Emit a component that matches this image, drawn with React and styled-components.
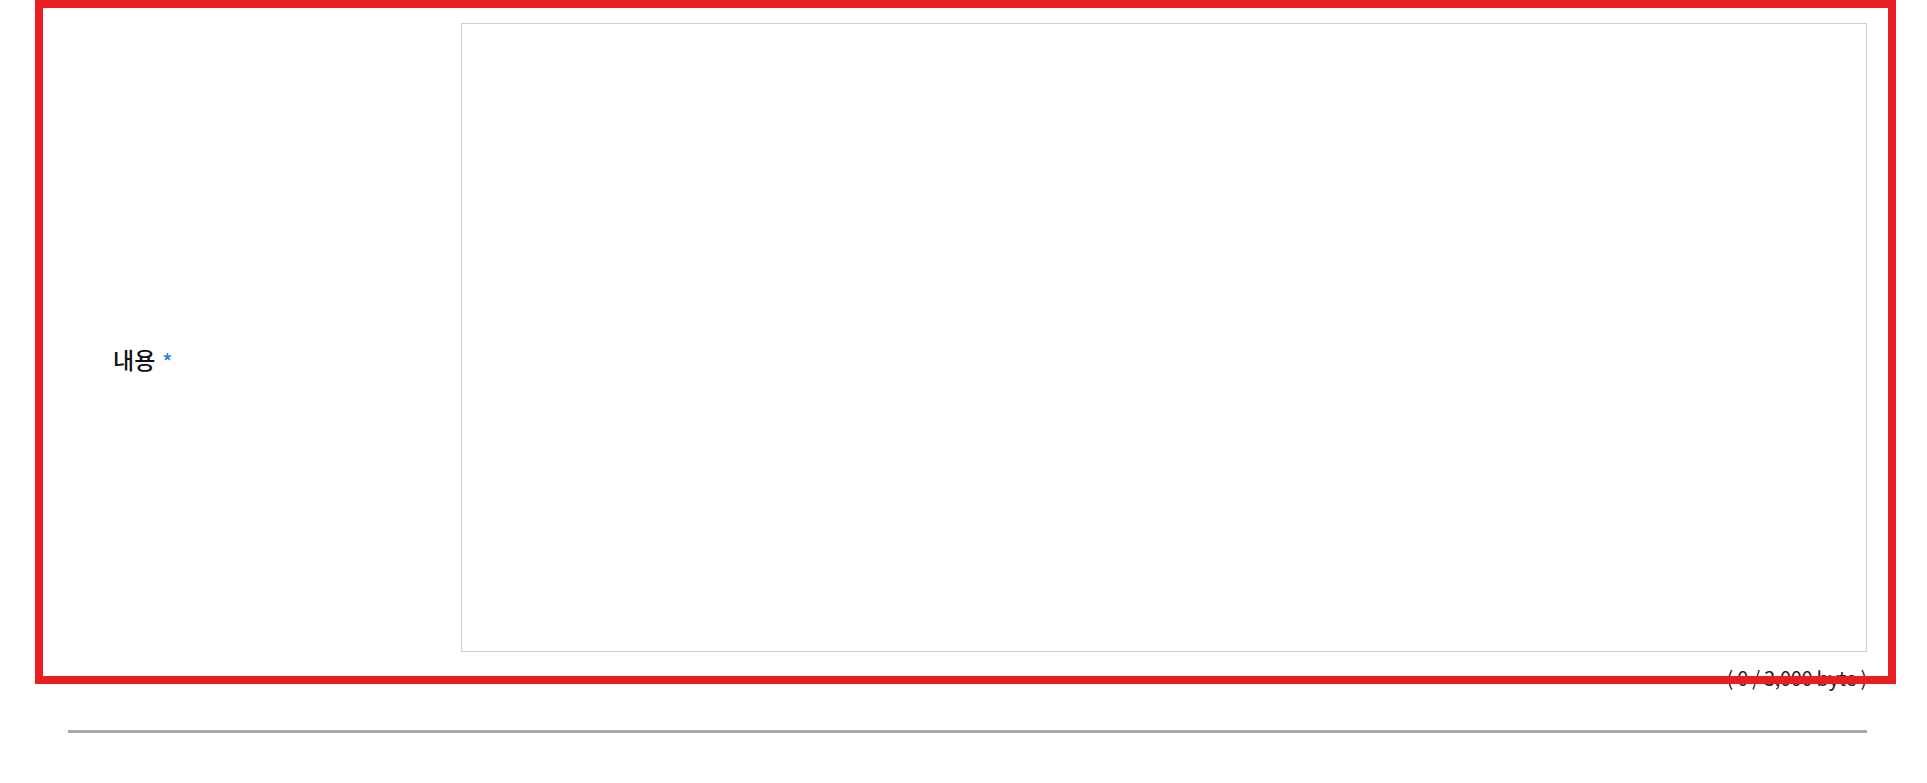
import React from "react";
import styled, { createGlobalStyle } from "styled-components";

const Global = createGlobalStyle`
  html, body { margin: 0; padding: 0; background: #fff; }
  body { font-family: "Noto Sans CJK KR", "Noto Sans", sans-serif; color: #111; }
  * { box-sizing: border-box; }
`;

const Page = styled.div`
  padding: 23px 60px 0 68px;
`;

const Row = styled.div`
  position: relative;
  display: flex;
  align-items: stretch;
`;

const LabelCell = styled.div`
  width: 393px;
  flex: none;
  display: flex;
  align-items: center;
  padding-left: 45px;
  padding-top: 4px;
`;

const Label = styled.label`
  font-size: 23px;
  font-weight: 500;
  color: #111;
`;

const Required = styled.span`
  color: #2b7de9;
  font-size: 21px;
  margin-left: 7px;
  position: relative;
  top: 1px;
`;

const FieldCell = styled.div`
  flex: 1;
  display: flex;
  flex-direction: column;
`;

const TextArea = styled.textarea`
  display: block;
  width: 100%;
  height: 629px;
  border: 1px solid #cfcfcf;
  resize: none;
  outline: none;
  padding: 12px;
  font-family: inherit;
  font-size: 16px;
`;

const Counter = styled.div`
  text-align: right;
  font-size: 20px;
  line-height: 27px;
  margin-top: 12px;
  color: #222;
  letter-spacing: -0.3px;
`;

const Highlight = styled.div`
  position: absolute;
  top: -23px;
  left: -33px;
  width: 1861px;
  height: 684px;
  border: 8px solid #e81e22;
  pointer-events: none;
`;

const Divider = styled.hr`
  margin: 39px 0 0;
  border: none;
  height: 3px;
  background: #a9a9a9;
`;

export default function App() {
  return (
    <>
      <Global />
      <Page>
        <Row>
          <LabelCell>
            <Label>
              내용<Required>*</Required>
            </Label>
          </LabelCell>
          <FieldCell>
            <TextArea />
            <Counter>( 0 / 3,000 byte )</Counter>
          </FieldCell>
          <Highlight />
        </Row>
        <Divider />
      </Page>
    </>
  );
}
